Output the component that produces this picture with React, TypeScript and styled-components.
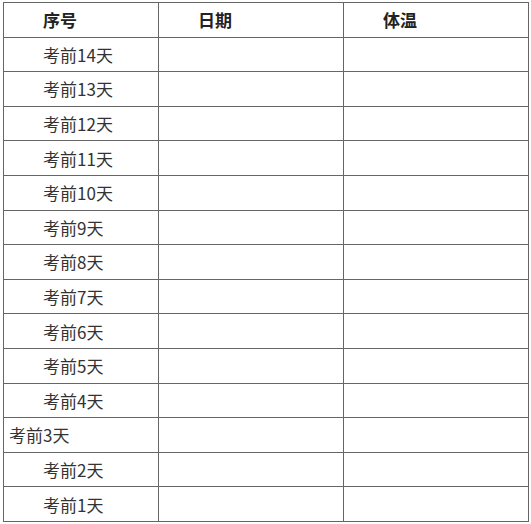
import React from "react";
import styled, {createGlobalStyle} from "styled-components";

const GlobalStyle = createGlobalStyle`
  body {
    margin: 0;
    background: #fff;
    font-family: "Noto Sans CJK SC", "Noto Sans", sans-serif;
  }
`;

const Page = styled.div`
  padding: 2px 3px;
`;

const Table = styled.table`
  border-collapse: collapse;
  table-layout: fixed;
  width: 525px;
  font-size: 17px;
  color: #333;
`;

const Row = styled.tr`
  height: 34.6px;
`;

const HeadCell = styled.th<{ $w: number }>`
  box-sizing: border-box;
  width: ${p => p.$w}px;
  border: 1px solid #666;
  padding: 0 5px;
  text-align: left;
  text-indent: 2em;
  font-weight: bold;
  color: #222;
  line-height: 1;
`;

const Cell = styled.td<{ $indent?: boolean }>`
  border: 1px solid #666;
  padding: 0 5px;
  text-indent: ${p => (p.$indent ? "2em" : "0")};
  line-height: 1;
  white-space: nowrap;
`;

const days = [14, 13, 12, 11, 10, 9, 8, 7, 6, 5, 4, 3, 2, 1];

export default function App() {
    return (
        <Page>
            <GlobalStyle/>
            <Table>
                <thead>
                <Row>
                    <HeadCell $w={155}>序号</HeadCell>
                    <HeadCell $w={185}>日期</HeadCell>
                    <HeadCell $w={185}>体温</HeadCell>
                </Row>
                </thead>
                <tbody>
                {days.map(d => (
                    <Row key={d}>
                        <Cell $indent={d !== 3}>考前{d}天</Cell>
                        <Cell/>
                        <Cell/>
                    </Row>
                ))}
                </tbody>
            </Table>
        </Page>
    );
}
